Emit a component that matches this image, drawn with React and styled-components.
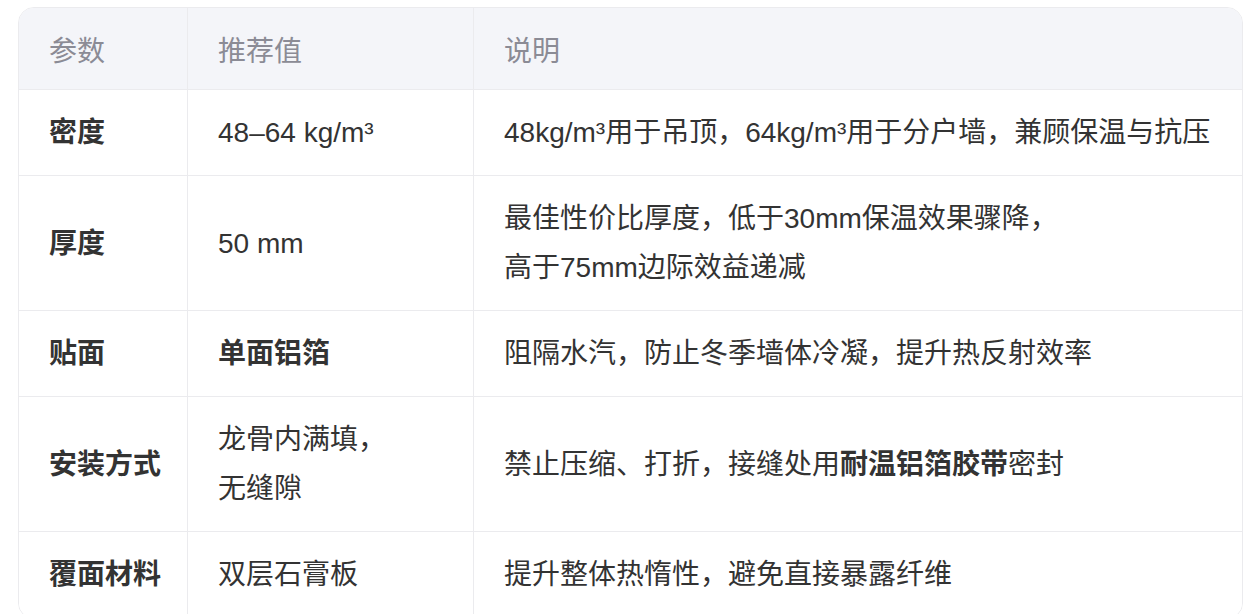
import React from "react";
import styled, { createGlobalStyle } from "styled-components";

const Global = createGlobalStyle`
  html, body {
    margin: 0;
    padding: 0;
    background: #ffffff;
    overflow: hidden;
  }
  body {
    font-family: "Liberation Sans", "Noto Sans CJK SC", sans-serif;
  }
  * { box-sizing: border-box; }
`;

const Page = styled.div`
  padding: 7px 7px 0 18px;
`;

const Table = styled.div`
  display: grid;
  grid-template-columns: 169px 286px 1fr;
  border: 1px solid #ebebee;
  border-radius: 16px;
  overflow: hidden;
  background: #ffffff;
`;

const Cell = styled.div`
  display: flex;
  align-items: center;
  padding: ${(p) => (p.$head ? "19px 30px 13px" : "18px 30px")};
  background: ${(p) => (p.$head ? "#f4f5f9" : "#ffffff")};
  border-bottom: 1px solid #ebebee;
  border-right: ${(p) => (p.$last ? "none" : "1px solid #ebebee")};
  font-size: 28px;
  line-height: 49px;
  color: ${(p) => (p.$head ? "#8b8b95" : "#333333")};
  font-weight: ${(p) => (p.$bold ? 700 : 400)};
  white-space: nowrap;
`;

const Strong = styled.strong`
  font-weight: 700;
  color: #333333;
`;

const rows = [
  { k: "密度", v: "48–64 kg/m³", d: "48kg/m³用于吊顶，64kg/m³用于分户墙，兼顾保温与抗压" },
  {
    k: "厚度",
    v: "50 mm",
    d: (
      <>
        最佳性价比厚度，低于30mm保温效果骤降，
        <br />
        高于75mm边际效益递减
      </>
    ),
  },
  { k: "贴面", v: "单面铝箔", vBold: true, d: "阻隔水汽，防止冬季墙体冷凝，提升热反射效率" },
  {
    k: "安装方式",
    v: (
      <>
        龙骨内满填，
        <br />
        无缝隙
      </>
    ),
    d: (
      <>
        禁止压缩、打折，接缝处用<Strong>耐温铝箔胶带</Strong>密封
      </>
    ),
  },
  { k: "覆面材料", v: "双层石膏板", d: "提升整体热惰性，避免直接暴露纤维" },
];

const Text = styled.div``;

export default function App() {
  return (
    <Page>
      <Global />
      <Table>
        <Cell $head>参数</Cell>
        <Cell $head>推荐值</Cell>
        <Cell $head $last>说明</Cell>
        {rows.map((r, i) => (
          <React.Fragment key={i}>
            <Cell $bold>{r.k}</Cell>
            <Cell $bold={r.vBold}>
              <Text>{r.v}</Text>
            </Cell>
            <Cell $last>
              <Text>{r.d}</Text>
            </Cell>
          </React.Fragment>
        ))}
      </Table>
    </Page>
  );
}
